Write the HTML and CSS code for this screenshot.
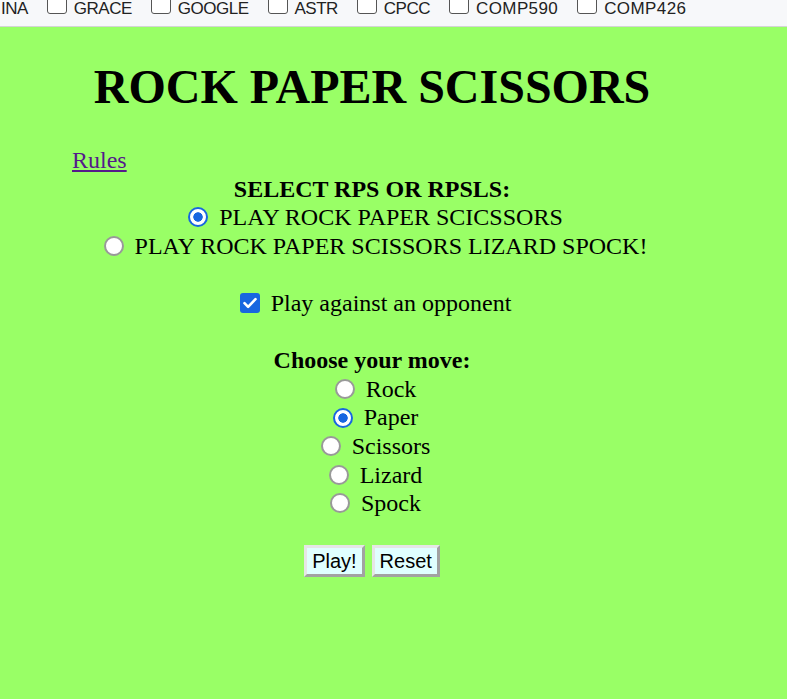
FILE: index.html
```html
<!DOCTYPE html>
<html>
<head>
<meta charset="utf-8">
<title>Rock Paper Scissors</title>
<link rel="stylesheet" href="styles.css">
</head>
<body>
<div class="bookmarks">
  <span class="bm-text cut">INA</span>
  <span class="bm"><span class="bm-box"></span><span class="bm-text">GRACE</span></span>
  <span class="bm"><span class="bm-box"></span><span class="bm-text">GOOGLE</span></span>
  <span class="bm"><span class="bm-box"></span><span class="bm-text">ASTR</span></span>
  <span class="bm"><span class="bm-box"></span><span class="bm-text">CPCC</span></span>
  <span class="bm"><span class="bm-box"></span><span class="bm-text">COMP590</span></span>
  <span class="bm"><span class="bm-box"></span><span class="bm-text">COMP426</span></span>
</div>
<main class="page">
  <h1 class="title">ROCK PAPER SCISSORS</h1>
  <a class="rules" href="#rules">Rules</a>
  <form class="game">
    <div class="heading">SELECT RPS OR RPSLS:</div>
    <label class="row"><input class="radio" type="radio" name="mode" checked> PLAY ROCK PAPER SCICSSORS</label>
    <label class="row"><input class="radio" type="radio" name="mode"> PLAY ROCK PAPER SCISSORS LIZARD SPOCK!</label>
    <div class="blank"></div>
    <label class="row"><input class="check" type="checkbox" checked> Play against an opponent</label>
    <div class="blank"></div>
    <div class="heading">Choose your move:</div>
    <label class="row"><input class="radio" type="radio" name="move"> Rock</label>
    <label class="row"><input class="radio" type="radio" name="move" checked> Paper</label>
    <label class="row"><input class="radio" type="radio" name="move"> Scissors</label>
    <label class="row"><input class="radio" type="radio" name="move"> Lizard</label>
    <label class="row"><input class="radio" type="radio" name="move"> Spock</label>
    <div class="buttons">
      <button type="button" class="btn">Play!</button>
      <button type="reset" class="btn">Reset</button>
    </div>
  </form>
</main>
</body>
</html>
```

FILE: styles.css
```css
html, body {
  margin: 0;
  padding: 0;
}
body {
  background: #99ff66;
  font-family: "Liberation Serif", "Times New Roman", serif;
  color: #000;
  height: 699px;
  overflow: hidden;
}
.bookmarks {
  height: 7px;
  padding-bottom: 19px;
  background: #f7f8fa;
  border-bottom: 1px solid #d4d4d4;
  display: flex;
  align-items: center;
  font-family: "Liberation Sans", Arial, sans-serif;
  font-size: 17px;
  letter-spacing: -0.5px;
  color: #222;
  overflow: hidden;
  white-space: nowrap;
}
.bm-text {
  padding-top: 11px;
}
.bm-text.cut {
  margin-left: 1px;
}
.bm {
  display: flex;
  align-items: center;
  margin-left: 19px;
}
.bm:nth-child(6) {
  letter-spacing: 0.4px;
}
.bm:nth-child(7) {
  letter-spacing: 0.4px;
}
.bm-box {
  width: 18px;
  height: 18px;
  border: 1.5px solid #555;
  border-radius: 3px;
  background: #fff;
  margin-right: 7px;
}
.page {
  width: 608px;
  margin-left: 68px;
}
.title {
  margin: 34px 0 33px;
  font-size: 48px;
  font-weight: bold;
  text-align: center;
  line-height: 52px;
}
.rules {
  color: #551a8b;
  font-size: 24px;
  line-height: 28.6px;
  display: inline-block;
  margin-left: 4px;
}
.game {
  display: flex;
  flex-direction: column;
  align-items: center;
  font-size: 24px;
  line-height: 28.6px;
}
.heading {
  font-weight: bold;
}
.row {
  display: flex;
  align-items: center;
  white-space: pre;
}
.blank {
  height: 28.6px;
}
.radio {
  appearance: none;
  -webkit-appearance: none;
  width: 20px;
  height: 20px;
  margin: 0 5px 0 7px;
  border-radius: 50%;
  border: 2.5px solid #999;
  background: #fff;
  box-sizing: border-box;
}
.radio:checked {
  border: 2.5px solid #1866e0;
  background: radial-gradient(circle, #1866e0 0 4.4px, #fff 5px);
}
.check {
  appearance: none;
  -webkit-appearance: none;
  width: 20px;
  height: 20px;
  margin: 0 5px 0 7px;
  border-radius: 3px;
  background: #1866e0 url("data:image/svg+xml;utf8,<svg xmlns='http://www.w3.org/2000/svg' viewBox='0 0 20 20'><path d='M4.5 10.2l3.6 3.6 7.4-7.6' fill='none' stroke='white' stroke-width='2.6' stroke-linecap='round' stroke-linejoin='round'/></svg>") center/20px 20px no-repeat;
}
.buttons {
  display: flex;
  gap: 7px;
  margin-top: 27px;
}
.btn {
  font-family: "Liberation Sans", Arial, sans-serif;
  font-size: 20px;
  background: #e0ffff;
  color: #000;
  border: 3px solid #c8c8c8;
  border-top-color: #e6e6e6;
  border-left-color: #e6e6e6;
  border-right-color: #a2a2a2;
  border-bottom-color: #a2a2a2;
  padding: 0 5px;
  height: 32px;
  line-height: 24px;
}
```
